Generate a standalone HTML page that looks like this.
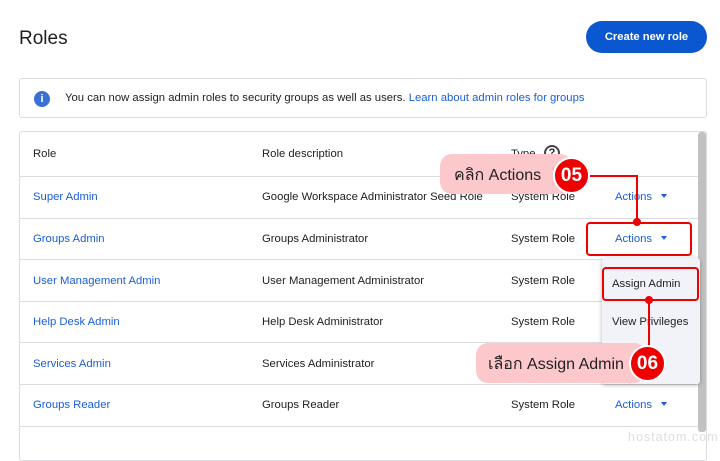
<!DOCTYPE html>
<html><head><meta charset="utf-8"><style>
*{box-sizing:border-box;margin:0;padding:0}
body{width:720px;height:447px;background:#fff;font-family:"Liberation Sans","Noto Sans CJK SC",sans-serif;color:#202124;position:relative;overflow:hidden;font-size:11.3px}
.a{position:absolute}
h1{position:absolute;left:19px;top:28px;font-size:19px;font-weight:400}
.btn{left:586px;top:21px;width:121px;height:32px;border-radius:16px;background:#0b57d0;color:#fff;font-weight:bold;font-size:11.2px;line-height:32px;text-align:center}
.ban{left:19px;top:78px;width:688px;height:40px;border:1px solid #dadce0;border-radius:3px}
.tbl{left:19px;top:131px;width:688px;height:330px;border:1px solid #dadce0;border-radius:3px}
.row{position:absolute;left:20px;width:678px;border-top:1px solid #dadce0}
.t{position:absolute;font-size:11.3px;white-space:nowrap}
.l{color:#1a5fd6}
.act{color:#1a5fd6}
.tri{display:inline-block;border-left:3.5px solid transparent;border-right:3.5px solid transparent;border-top:4px solid #1a5fd6;margin-left:9px;vertical-align:2px}
.red{border:2px solid #e00;border-radius:4px}
.pill{background:#fcc8cc;border-radius:12px;font-size:16px;color:#222}
.num{width:37px;height:37px;border-radius:50%;background:#e00;border:2px solid #fff;color:#fff;font-weight:bold;font-size:19px;text-align:center;line-height:33px}
.dot{width:8px;height:8px;border-radius:50%;background:#e00}
</style></head><body>
<h1>Roles</h1>
<div class="a btn">Create new role</div>
<div class="a ban"></div>
<div class="a" style="left:34px;top:91px;width:16px;height:16px;border-radius:50%;background:#3a6fd8;color:#fff;font-size:11px;font-weight:bold;text-align:center;line-height:16px">i</div>
<div class="t" style="left:65px;top:92px">You can now assign admin roles to security groups as well as users. <span class="l">Learn about admin roles for groups</span></div>
<div class="a tbl"></div>
<div class="a" style="left:698px;top:132px;width:8px;height:300px;background:#c1c1c1;border-radius:3px"></div>
<div class="t" style="left:33px;top:148px">Role</div>
<div class="t" style="left:262px;top:148px">Role description</div>
<div class="t" style="left:511px;top:148px">Type</div>
<div class="a" style="left:544px;top:145px;width:16px;height:16px;border:2px solid #444;border-radius:50%;font-size:11px;font-weight:bold;text-align:center;line-height:12px">?</div>

<div class="row" style="top:176px"></div>
<div class="row" style="top:218px"></div>
<div class="row" style="top:259px"></div>
<div class="row" style="top:301px"></div>
<div class="row" style="top:342px"></div>
<div class="row" style="top:384px"></div>
<div class="row" style="top:426px"></div>

<div class="t l" style="left:33px;top:191px">Super Admin</div>
<div class="t" style="left:262px;top:191px">Google Workspace Administrator Seed Role</div>
<div class="t" style="left:511px;top:191px">System Role</div>
<div class="t act" style="left:615px;top:191px">Actions<span class="tri"></span></div>

<div class="t l" style="left:33px;top:233px">Groups Admin</div>
<div class="t" style="left:262px;top:233px">Groups Administrator</div>
<div class="t" style="left:511px;top:233px">System Role</div>
<div class="t act" style="left:615px;top:233px">Actions<span class="tri"></span></div>

<div class="t l" style="left:33px;top:275px">User Management Admin</div>
<div class="t" style="left:262px;top:275px">User Management Administrator</div>
<div class="t" style="left:511px;top:275px">System Role</div>

<div class="t l" style="left:33px;top:316px">Help Desk Admin</div>
<div class="t" style="left:262px;top:316px">Help Desk Administrator</div>
<div class="t" style="left:511px;top:316px">System Role</div>

<div class="t l" style="left:33px;top:358px">Services Admin</div>
<div class="t" style="left:262px;top:358px">Services Administrator</div>

<div class="t l" style="left:33px;top:399px">Groups Reader</div>
<div class="t" style="left:262px;top:399px">Groups Reader</div>
<div class="t" style="left:511px;top:399px">System Role</div>
<div class="t act" style="left:615px;top:399px">Actions<span class="tri"></span></div>

<div class="a" style="left:602px;top:258px;width:98px;height:126px;background:#f1f3f8;box-shadow:0 1px 4px rgba(0,0,0,.3);border-radius:3px"></div>
<div class="t" style="left:612px;top:278px">Assign Admin</div>
<div class="t" style="left:612px;top:316px">View Privileges</div>
<div class="t" style="left:640px;top:353px">ns</div>

<div class="a red" style="left:586px;top:222px;width:106px;height:34px"></div>
<div class="a red" style="left:602px;top:267px;width:97px;height:34px"></div>
<div class="a" style="left:590px;top:175px;width:47px;height:2px;background:#e00"></div>
<div class="a" style="left:636px;top:175px;width:2px;height:48px;background:#e00"></div>
<div class="a dot" style="left:633px;top:218px"></div>
<div class="a" style="left:648px;top:300px;width:2px;height:50px;background:#e00"></div>
<div class="a dot" style="left:645px;top:296px"></div>

<div class="a pill" style="left:440px;top:154px;width:132px;height:40px;padding:9px 0 0 14px">คลิก Actions</div>
<div class="a num" style="left:553px;top:157px">05</div>
<div class="a pill" style="left:476px;top:343px;width:170px;height:40px;padding:9px 0 0 12px">เลือก Assign Admin</div>
<div class="a num" style="left:629px;top:345px">06</div>
<div class="t" style="left:628px;top:430px;color:#ddd;font-size:12.5px;letter-spacing:1px">hostatom.com</div>
</body></html>
